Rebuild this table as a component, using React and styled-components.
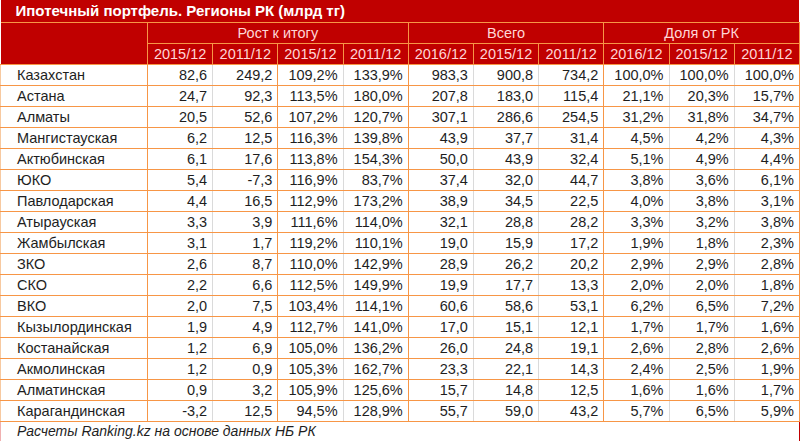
import styled, { createGlobalStyle } from 'styled-components';

const GlobalStyle = createGlobalStyle`
  html, body {
    margin: 0;
    padding: 0;
    background: #ffffff;
  }
  body {
    font-family: "Liberation Sans", Arial, sans-serif;
  }
`;

const RED = '#c00000';
const ORANGE = '#f79646';
const GRAY = '#dadada';

const Table = styled.table`
  border-collapse: collapse;
  table-layout: fixed;
  width: 799px;
  font-size: 14.5px;
  color: #1e1e1e;
`;

const TitleRow = styled.tr`
  height: 22px;
`;

const TitleCell = styled.th`
  background: ${RED};
  color: #ffffff;
  font-weight: bold;
  font-size: 15px;
  text-align: left;
  padding: 0 0 0 15px;
  border-bottom: 1px solid ${ORANGE};
`;

const HeadRow = styled.tr`
  height: 21px;
`;

const HeadCell = styled.th`
  background: ${RED};
  color: #ffd6d6;
  font-weight: normal;
  font-size: 14.5px;
  text-align: center;
  padding: 0;
  border: 1px solid ${ORANGE};
  border-top: none;
`;

const CornerCell = styled(HeadCell)`
  border-left: none;
`;

const Row = styled.tr`
  height: 21px;
`;

const NameCell = styled.td`
  padding: 0 0 0 16px;
  text-align: left;
  white-space: nowrap;
  border-bottom: 1px solid ${ORANGE};
  border-right: 1px solid ${ORANGE};
  border-left: 1px solid #f7c9a0;
`;

const NumCell = styled.td`
  padding: 0 5px 0 0;
  text-align: right;
  white-space: nowrap;
  border-bottom: 1px solid ${ORANGE};
  border-right: 1px solid ${(p) => (p.$sep ? ORANGE : GRAY)};
`;

const FooterCell = styled.td`
  font-style: italic;
  font-size: 14px;
  text-align: left;
  padding: 0 0 0 16px;
  border-top: 1px solid ${RED};
  border-bottom: 2px solid ${RED};
  border-right: 1px solid ${RED};
  border-left: 1px solid #f0b0b0;
`;

const years = ['2015/12', '2011/12', '2015/12', '2011/12', '2016/12', '2015/12', '2011/12', '2016/12', '2015/12', '2011/12'];
const separators = [false, true, false, true, false, false, true, false, false, true];

const rows = [
  ['Казахстан', '82,6', '249,2', '109,2%', '133,9%', '983,3', '900,8', '734,2', '100,0%', '100,0%', '100,0%'],
  ['Астана', '24,7', '92,3', '113,5%', '180,0%', '207,8', '183,0', '115,4', '21,1%', '20,3%', '15,7%'],
  ['Алматы', '20,5', '52,6', '107,2%', '120,7%', '307,1', '286,6', '254,5', '31,2%', '31,8%', '34,7%'],
  ['Мангистауская', '6,2', '12,5', '116,3%', '139,8%', '43,9', '37,7', '31,4', '4,5%', '4,2%', '4,3%'],
  ['Актюбинская', '6,1', '17,6', '113,8%', '154,3%', '50,0', '43,9', '32,4', '5,1%', '4,9%', '4,4%'],
  ['ЮКО', '5,4', '-7,3', '116,9%', '83,7%', '37,4', '32,0', '44,7', '3,8%', '3,6%', '6,1%'],
  ['Павлодарская', '4,4', '16,5', '112,9%', '173,2%', '38,9', '34,5', '22,5', '4,0%', '3,8%', '3,1%'],
  ['Атырауская', '3,3', '3,9', '111,6%', '114,0%', '32,1', '28,8', '28,2', '3,3%', '3,2%', '3,8%'],
  ['Жамбылская', '3,1', '1,7', '119,2%', '110,1%', '19,0', '15,9', '17,2', '1,9%', '1,8%', '2,3%'],
  ['ЗКО', '2,6', '8,7', '110,0%', '142,9%', '28,9', '26,2', '20,2', '2,9%', '2,9%', '2,8%'],
  ['СКО', '2,2', '6,6', '112,5%', '149,9%', '19,9', '17,7', '13,3', '2,0%', '2,0%', '1,8%'],
  ['ВКО', '2,0', '7,5', '103,4%', '114,1%', '60,6', '58,6', '53,1', '6,2%', '6,5%', '7,2%'],
  ['Кызылординская', '1,9', '4,9', '112,7%', '141,0%', '17,0', '15,1', '12,1', '1,7%', '1,7%', '1,6%'],
  ['Костанайская', '1,2', '6,9', '105,0%', '136,2%', '26,0', '24,8', '19,1', '2,6%', '2,8%', '2,6%'],
  ['Акмолинская', '1,2', '0,9', '105,3%', '162,7%', '23,3', '22,1', '14,3', '2,4%', '2,5%', '1,9%'],
  ['Алматинская', '0,9', '3,2', '105,9%', '125,6%', '15,7', '14,8', '12,5', '1,6%', '1,6%', '1,7%'],
  ['Карагандинская', '-3,2', '12,5', '94,5%', '128,9%', '55,7', '59,0', '43,2', '5,7%', '6,5%', '5,9%'],
];

export default function App() {
  return (
    <>
      <GlobalStyle />
      <Table>
        <colgroup>
          <col style={{ width: 147 }} />
          {years.map((_, i) => (
            <col key={i} style={{ width: 65.2 }} />
          ))}
        </colgroup>
        <thead>
          <TitleRow>
            <TitleCell colSpan={11}>Ипотечный портфель. Регионы РК (млрд тг)</TitleCell>
          </TitleRow>
          <HeadRow>
            <CornerCell rowSpan={2} />
            <HeadCell colSpan={4}>Рост к итогу</HeadCell>
            <HeadCell colSpan={3}>Всего</HeadCell>
            <HeadCell colSpan={3}>Доля от РК</HeadCell>
          </HeadRow>
          <HeadRow>
            {years.map((y, i) => (
              <HeadCell key={i}>{y}</HeadCell>
            ))}
          </HeadRow>
        </thead>
        <tbody>
          {rows.map(([name, ...values]) => (
            <Row key={name}>
              <NameCell>{name}</NameCell>
              {values.map((v, i) => (
                <NumCell key={i} $sep={separators[i]}>{v}</NumCell>
              ))}
            </Row>
          ))}
          <Row>
            <FooterCell colSpan={11}>Расчеты Ranking.kz на основе данных НБ РК</FooterCell>
          </Row>
        </tbody>
      </Table>
    </>
  );
}
